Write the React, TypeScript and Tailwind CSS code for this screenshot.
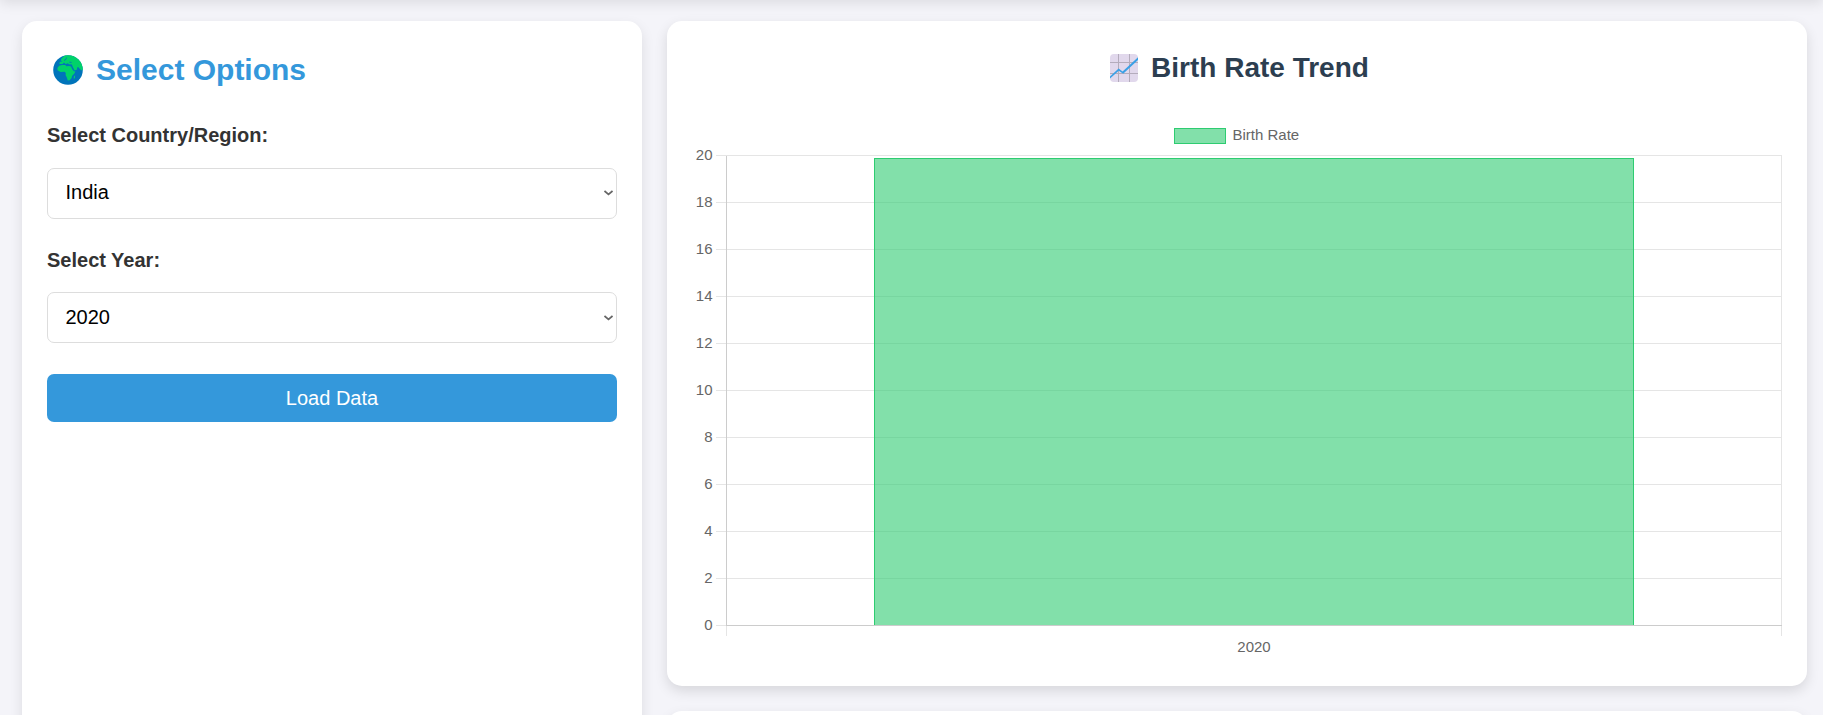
import React from "react";

const TICKS = [20, 18, 16, 14, 12, 10, 8, 6, 4, 2, 0];

function GlobeIcon() {
  return (
    <svg width="30" height="30" viewBox="0 0 30 30" className="shrink-0" aria-hidden="true">
      <clipPath id="globe">
        <circle cx="15" cy="15" r="14.8" />
      </clipPath>
      <circle cx="15" cy="15" r="14.8" fill="#0074ba" />
      <g clipPath="url(#globe)" fill="#00d26a">
        <path d="M8.5 3.5 L12 0 H24 L31 8 V13.6 L28.6 15.6 L26.6 13.8 L25.6 12.2 L24 12.6 L24.2 14.4 L21.6 15.6 L19.8 12 L18.9 9.4 L15.8 9.2 L15 8.2 L12.6 8.9 L11 7.6 L9.6 9 H6.4 L6.8 6.8 L9.3 6.6 L7.7 5.4 Z" />
        <path d="M6.2 10.8 L9.2 10 L12.3 10 L13.2 11.2 L16 11 L18 11.6 L19.2 14.2 L20.8 16.3 L22.4 16.5 L21.2 18.8 L19 21 L18.6 23 L16.6 25.2 L14.8 25.4 L13.8 22.4 L12.6 20 L12.8 18 L11.6 16.8 L7.6 17 L4.6 15.2 L4.4 13 Z" />
        <path d="M20.8 21.4 L22.2 20.2 L21.8 23 L20.8 24 Z" />
      </g>
      <g fill="none" stroke="#0074ba" strokeWidth="0.9">
        <path d="M11 5.4 L13 4.4 L13.4 2.6" />
        <path d="M16.4 7.2 L18.6 7.4" />
      </g>
    </svg>
  );
}

function TrendIcon() {
  return (
    <svg width="28" height="28" viewBox="0 0 28 28" className="shrink-0" aria-hidden="true">
      <rect width="28" height="28" rx="4" fill="#e1d8ec" />
      <path d="M8.5 0V28M19.5 0V28M0 8.5H28M0 19.5H28" stroke="#b4acbc" strokeWidth="1" />
      <path d="M0 24.6 V22.4 L8.6 14.6 L12.6 17.6 L28 3.2 V6 L13.2 19.8 L8.8 16.7 Z" fill="#3aa0e6" />
    </svg>
  );
}

function SelectField({ label, value }: { label: string; value: string }) {
  return (
    <label className="flex flex-col gap-[20.5px]">
      <span className="text-xl leading-[23px] font-bold text-[#333]">{label}</span>
      <span className="grid items-center">
        <select
          defaultValue={value}
          className="col-start-1 row-start-1 h-[51px] w-full appearance-none rounded-[7px] border border-[#dddddd] bg-white px-[17.5px] pb-px text-xl leading-[23px] text-black"
        >
          <option>{value}</option>
        </select>
        <svg
          width="9"
          height="6"
          viewBox="0 0 9 6"
          className="pointer-events-none col-start-1 row-start-1 mr-[4.5px] justify-self-end"
          aria-hidden="true"
        >
          <path d="M0.5 1 L4.5 4.4 L8.5 1" fill="none" stroke="#666" strokeWidth="1.7" />
        </svg>
      </span>
    </label>
  );
}

function BarChart() {
  return (
    <svg width="1090" height="540" viewBox="0 0 1090 540" className="block text-[15px]">
      <g shapeRendering="crispEdges">
        {TICKS.map((t, i) => (
          <rect key={t} x="24" y={34 + i * 47} width="1066" height="1" fill="#e5e5e5" />
        ))}
        <rect x="34" y="34" width="1" height="481" fill="#e5e5e5" />
        <rect x="1089" y="34" width="1" height="481" fill="#e5e5e5" />
        <rect x="182" y="37" width="760" height="467" fill="#2ecc71" fillOpacity="0.6" />
        <path d="M182.5 504 V37.5 H941.5 V504" fill="none" stroke="#2ecc71" />
        <rect x="34" y="35" width="1" height="470" fill="#cccccc" />
        <rect x="34" y="504" width="1056" height="1" fill="#cccccc" />
        <rect x="482.5" y="7.5" width="51" height="15" fill="#82e0aa" stroke="#2ecc71" />
      </g>
      <g fill="#666666">
        <text x="540.5" y="19">Birth Rate</text>
        {TICKS.map((t, i) => (
          <text key={t} x="20.5" y={39 + i * 47} textAnchor="end">
            {t}
          </text>
        ))}
        <text x="562" y="531" textAnchor="middle">
          2020
        </text>
      </g>
    </svg>
  );
}

export default function App() {
  return (
    <div className="h-[715px] overflow-hidden bg-[#f4f4f9] font-['Liberation_Sans',Arial,sans-serif]">
      <header className="-mt-10 h-10 bg-white shadow-[0_2.5px_12.5px_rgba(0,0,0,0.1)]" />
      <main className="flex gap-[25px] pt-[21px] pr-4 pl-[22px]">
        <section className="h-[760px] w-[620px] shrink-0 rounded-[15px] bg-white px-[25px] pt-[31px] shadow-[0_5px_12.5px_rgba(0,0,0,0.1)]">
          <h2 className="flex h-[35px] items-center gap-[13.5px] pl-[5.5px] text-[30px] font-bold text-[#3498db]">
            <GlobeIcon />
            Select Options
          </h2>
          <div className="mt-[37px] flex flex-col gap-[30px]">
            <SelectField label="Select Country/Region:" value="India" />
            <SelectField label="Select Year:" value="2020" />
          </div>
          <button className="mt-[31px] h-12 w-full rounded-[7px] bg-[#3498db] text-xl text-white">
            Load Data
          </button>
        </section>
        <div className="flex w-[1140px] flex-col gap-[25px]">
          <section className="h-[665px] shrink-0 rounded-[15px] bg-white px-[25px] pt-[31px] shadow-[0_5px_12.5px_rgba(0,0,0,0.12)]">
            <h2 className="flex h-8 items-center justify-center gap-[13px] pl-[5px] text-[28px] font-bold text-[#2c3e50]">
              <TrendIcon />
              Birth Rate Trend
            </h2>
            <div className="mt-[37px]">
              <BarChart />
            </div>
          </section>
          <section className="h-40 shrink-0 rounded-[15px] bg-white shadow-[0_5px_12.5px_rgba(0,0,0,0.1)]" />
        </div>
      </main>
    </div>
  );
}
